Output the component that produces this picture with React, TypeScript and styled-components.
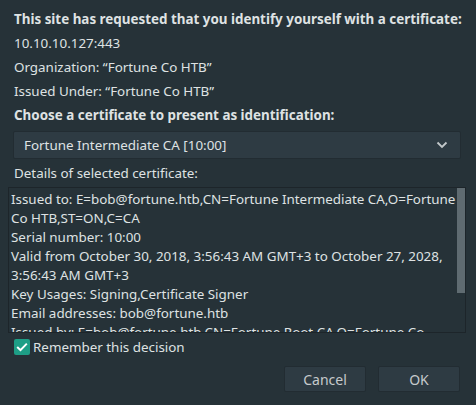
import React from 'react';
import styled, { createGlobalStyle } from 'styled-components';

const GlobalStyle = createGlobalStyle`
  html, body {
    margin: 0;
    padding: 0;
    background: #263238;
  }
  body {
    font-family: "Noto Sans", "Open Sans", sans-serif;
    font-size: 13.4px;
    color: #dfe2e3;
  }
`;

const details = [
    'Issued to: E=bob@fortune.htb,CN=Fortune Intermediate CA,O=Fortune Co HTB,ST=ON,C=CA',
    'Serial number: 10:00',
    'Valid from October 30, 2018, 3:56:43 AM GMT+3 to October 27, 2028, 3:56:43 AM GMT+3',
    'Key Usages: Signing,Certificate Signer',
    'Email addresses: bob@fortune.htb',
    'Issued by: E=bob@fortune.htb,CN=Fortune Root CA,O=Fortune Co HTB,ST=ON,C=CA',
    'Stored in: Software Security Device'
];

const App = () => (
    <Dialog>
        <GlobalStyle/>
        <Header>
            <Line bold>This site has requested that you identify yourself with a certificate:</Line>
            <Line>10.10.10.127:443</Line>
            <Line>Organization: “Fortune Co HTB”</Line>
            <Line>Issued Under: “Fortune Co HTB”</Line>
            <Line bold>Choose a certificate to present as identification:</Line>
        </Header>
        <Select>
            <span>Fortune Intermediate CA [10:00]</span>
            <svg width="12" height="8" viewBox="0 0 12 8">
                <path d="M1.5 1.5 L6 6 L10.5 1.5" fill="none" stroke="#c3c8ca" strokeWidth="1.8"/>
            </svg>
        </Select>
        <Label>Details of selected certificate:</Label>
        <DetailsBox>
            <DetailsText>
                {details.map(d => <div key={d}>{d}</div>)}
            </DetailsText>
            <ScrollThumb/>
        </DetailsBox>
        <CheckRow>
            <CheckBox>
                <svg width="12" height="10" viewBox="0 0 12 10">
                    <path d="M1.2 5 L4.5 8.2 L10.8 1.6" fill="none" stroke="#ffffff" strokeWidth="2"/>
                </svg>
            </CheckBox>
            <span>Remember this decision</span>
        </CheckRow>
        <Buttons>
            <Button>Cancel</Button>
            <Button>OK</Button>
        </Buttons>
    </Dialog>
);

const Dialog: any = styled.div`
  width: 476px;
  height: 405px;
  box-sizing: border-box;
  background: #263238;
  display: flex;
  flex-direction: column;
  overflow: hidden;
`;

const Header: any = styled.div`
  padding: 7px 0 0 14px;
  display: flex;
  flex-direction: column;
`;

const Line: any = styled.div`
  line-height: 24px;
  white-space: nowrap;
  font-weight: ${({ bold }: any) => bold ? 700 : 400};
`;

const Select: any = styled.div`
  margin: 4px 15px 0 13px;
  height: 28px;
  box-sizing: border-box;
  padding: 0 12px 0 10px;
  background: #2e3b43;
  border: 1px solid #222c32;
  border-radius: 2px;
  display: flex;
  align-items: center;
  justify-content: space-between;
`;

const Label: any = styled.div`
  padding-left: 14px;
  margin-top: 2px;
  line-height: 24px;
`;

const DetailsBox: any = styled.div`
  position: relative;
  margin: 2px 10px 0 8px;
  height: 146px;
  box-sizing: border-box;
  border: 1px solid #1d252a;
  overflow: hidden;
`;

const DetailsText: any = styled.div`
  padding: 2px 8px 0 2px;
  line-height: 19px;
`;

const ScrollThumb: any = styled.div`
  position: absolute;
  top: 0;
  right: 0;
  width: 8px;
  height: 105px;
  background: #5f6b71;
`;

const CheckRow: any = styled.div`
  display: flex;
  align-items: center;
  gap: 3px;
  padding: 6px 0 0 14px;
  line-height: 16px;
`;

const CheckBox: any = styled.div`
  width: 16px;
  height: 16px;
  border-radius: 2px;
  background: #1e9e86;
  display: flex;
  align-items: center;
  justify-content: center;
`;

const Buttons: any = styled.div`
  display: flex;
  justify-content: flex-end;
  gap: 12px;
  padding: 11px 16px 0 0;
`;

const Button: any = styled.div`
  width: 82px;
  height: 26px;
  box-sizing: border-box;
  background: #2e3b43;
  border: 1px solid #222c32;
  border-radius: 2px;
  color: #c6cacc;
  font-size: 14px;
  display: flex;
  align-items: center;
  justify-content: center;
`;

export default App;
